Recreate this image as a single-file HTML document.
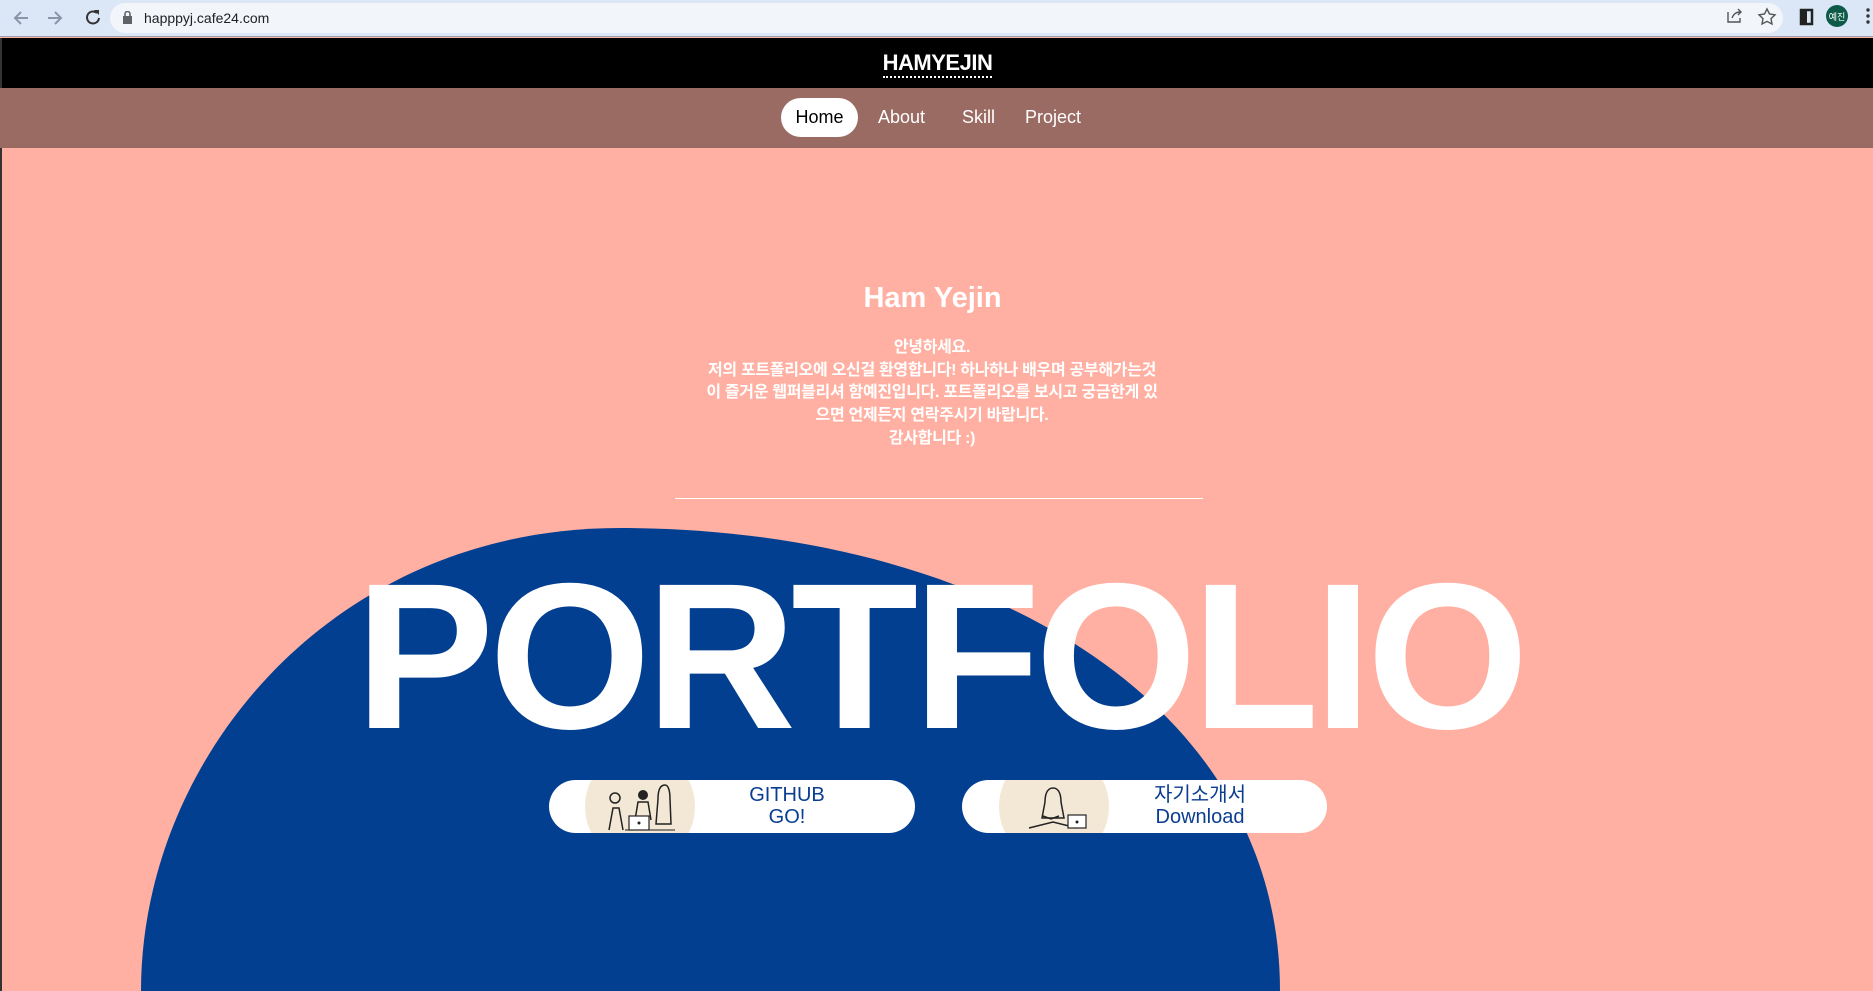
<!DOCTYPE html>
<html><head><meta charset="utf-8">
<style>
*{margin:0;padding:0;box-sizing:border-box}
html,body{width:1873px;height:991px;overflow:hidden;background:#ffb0a2;font-family:"Liberation Sans","Noto Sans CJK KR",sans-serif}
.chrome{position:absolute;left:0;top:0;width:1873px;height:37px;background:#dbe6f7;border-bottom:1px solid #9aa3ad}
.addr{position:absolute;left:110px;top:3px;width:1673px;height:30px;border-radius:15px;background:#f2f5fa}
.url{position:absolute;left:144px;top:10px;font-size:14px;color:#202124}
.top{position:absolute;left:0;top:38px;width:1873px;height:50px;background:#000;border-left:2px solid #333}
.logo{position:absolute;left:0;right:0;top:12px;text-align:center;color:#fff;font-size:22px;font-weight:bold;letter-spacing:-0.5px}
.logo span{border-bottom:2px dotted #fff;padding-bottom:1px}
.nav{position:absolute;left:0;top:88px;width:1873px;height:60px;background:#9a6b62}
.nav a{position:absolute;top:10px;height:39px;line-height:39px;color:#fff;font-size:18px;text-decoration:none}
.home{left:781px;width:77px;background:#fff;color:#000!important;border-radius:20px;text-align:center}
.pink{position:absolute;left:0;top:148px;width:1873px;height:843px;background:#ffb0a2;border-left:2px solid #333;overflow:hidden}
svg.blob{position:absolute;left:0;top:0}
h1{position:absolute;left:0;width:1865px;top:282px;text-align:center;color:#fff;font-size:29px;font-weight:bold}
.intro{position:absolute;left:632px;width:600px;top:337px;text-align:center;color:#fff;font-size:16px;line-height:22.7px;font-weight:bold;letter-spacing:-0.3px}
.hr{position:absolute;left:675px;top:498px;width:528px;height:1px;background:#fff}
.big{position:absolute;left:0;width:1873px;top:527px;text-align:center;color:#fff;font-size:208px;font-weight:bold;letter-spacing:-5px;line-height:260px;padding-left:6px}
.btn{position:absolute;top:780px;height:53px;background:#fff;border-radius:27px;overflow:hidden}
.btn .img{position:absolute;top:-30px;width:110px;height:113px;border-radius:50%;background:#f3e7d6}
.btn .t{position:absolute;top:4px;text-align:center;color:#0a3d91;font-size:20px;line-height:22px;width:200px}
</style></head><body>
<div class="chrome">
<svg width="100" height="36" style="position:absolute;left:10px;top:0">
<path d="M18 18h-12M11 12l-6 6 6 6" stroke="#8a96a8" stroke-width="2" fill="none"/>
<path d="M38 18h12M45 12l6 6-6 6" stroke="#8a96a8" stroke-width="2" fill="none"/>
<path d="M87 13a6 6 0 1 0 2 5" stroke="#333" stroke-width="2" fill="none"/><path d="M84 10h5v5z" fill="#333"/>
</svg>
<div class="addr"></div>
<svg width="12" height="14" style="position:absolute;left:122px;top:11px"><rect x="1" y="5" width="9" height="8" fill="#5f6368"/><path d="M3 6V3a2.5 2.5 0 0 1 5 0v3" stroke="#5f6368" stroke-width="1.6" fill="none"/></svg>
<div class="url">happpyj.cafe24.com</div>
<svg width="180" height="36" style="position:absolute;left:1700px;top:0">
<path d="M28 12v10h12v-4M32 18c2-5 5-6 9-6M38 9l3 3-3 3" stroke="#555" stroke-width="1.4" fill="none"/>
<path d="M67 9l2.5 5 5.5.8-4 3.8 1 5.4-5-2.6-5 2.6 1-5.4-4-3.8 5.5-.8z" stroke="#555" stroke-width="1.4" fill="none"/>
<rect x="101" y="10" width="11" height="14" fill="none" stroke="#222" stroke-width="2.5"/><rect x="101" y="10" width="6" height="14" fill="#222"/>
<circle cx="137" cy="16" r="11" fill="#0d5a48"/><text x="137" y="20" fill="#fff" font-size="9" text-anchor="middle" font-family="Noto Sans CJK KR">예진</text>
<circle cx="168" cy="10" r="1.7" fill="#333"/><circle cx="168" cy="16" r="1.7" fill="#333"/><circle cx="168" cy="22" r="1.7" fill="#333"/>
</svg>
</div>
<div class="top"><div class="logo"><span>HAMYEJIN</span></div></div>
<div class="nav">
<a class="home" href="#">Home</a>
<a href="#" style="left:878px">About</a>
<a href="#" style="left:962px">Skill</a>
<a href="#" style="left:1025px">Project</a>
</div>
<div class="pink"></div>
<svg class="blob" width="1873" height="991"><path d="M141,991 C141,760 330,528 620,528 C980,528 1280,700 1280,991 Z" fill="#033f91"/></svg>
<h1>Ham Yejin</h1>
<div class="intro">안녕하세요.<br>저의 포트폴리오에 오신걸 환영합니다! 하나하나 배우며 공부해가는것<br>이 즐거운 웹퍼블리셔 함예진입니다. 포트폴리오를 보시고 궁금한게 있<br>으면 언제든지 연락주시기 바랍니다.<br>감사합니다 :)</div>
<div class="hr"></div>
<div class="big">PORTFOLIO</div>
<div class="btn" style="left:549px;width:366px">
<div class="img" style="left:36px"></div>
<svg width="110" height="53" style="position:absolute;left:36px;top:0">
<circle cx="30" cy="18" r="5" fill="none" stroke="#222" stroke-width="1.5"/><path d="M24 50l4-22h6l4 22" stroke="#222" fill="none" stroke-width="1.5"/>
<circle cx="58" cy="15" r="5" fill="#222"/><path d="M50 40l3-18h10l3 18" stroke="#222" fill="none" stroke-width="1.5"/>
<path d="M80 5c-6 0-7 8-7 14l-2 25h15l-1-25c0-6-1-14-5-14z" fill="none" stroke="#222" stroke-width="1.5"/>
<rect x="44" y="36" width="20" height="14" fill="#fff" stroke="#222" stroke-width="1.2"/><circle cx="54" cy="43" r="1.5" fill="#222"/>
<path d="M40 50h50" stroke="#222"/>
</svg>
<div class="t" style="left:138px">GITHUB<br>GO!</div>
</div>
<div class="btn" style="left:962px;width:365px">
<div class="img" style="left:37px"></div>
<svg width="110" height="53" style="position:absolute;left:37px;top:0">
<path d="M54 8c-7 0-8 9-8 14l-3 16h22l-3-16c0-5-1-14-8-14z" fill="none" stroke="#222" stroke-width="1.5"/>
<path d="M44 36l8 3 8-3M30 48l24-6 24 6" stroke="#222" fill="none" stroke-width="1.5"/>
<rect x="69" y="35" width="18" height="13" fill="#fff" stroke="#222" stroke-width="1.2"/><circle cx="78" cy="42" r="1.5" fill="#222"/>
</svg>
<div class="t" style="left:138px">자기소개서<br>Download</div>
</div>
</body></html>
